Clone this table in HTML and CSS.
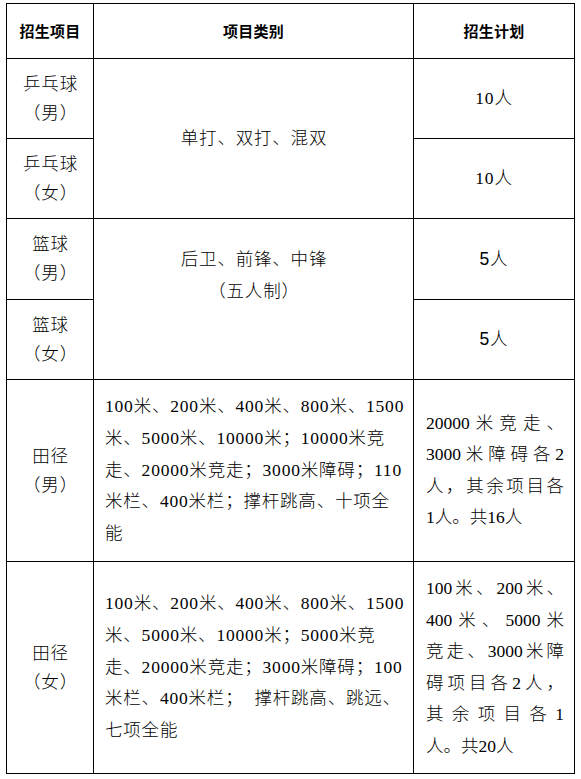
FILE: index.html
```html
<!DOCTYPE html>
<html lang="zh-CN">
<head>
<meta charset="utf-8">
<title>招生项目</title>
<link rel="stylesheet" href="styles.css">
</head>
<body>
<div class="sheet">
  <div class="grid">
    <div class="cell head">招生项目</div>
    <div class="cell head">项目类别</div>
    <div class="cell head">招生计划</div>

    <div class="cell name pp">乒乓球<br>（男）</div>
    <div class="cell mid span2">单打、双打、混双</div>
    <div class="cell plan">10人</div>
    <div class="cell name pp">乒乓球<br>（女）</div>
    <div class="cell plan">10人</div>

    <div class="cell name">篮球<br>（男）</div>
    <div class="cell mid span2 top">后卫、前锋、中锋<br>（五人制）</div>
    <div class="cell plan"><div><span class="sans">5</span>人</div></div>
    <div class="cell name">篮球<br>（女）</div>
    <div class="cell plan"><div><span class="sans">5</span>人</div></div>

    <div class="cell name">田径<br>（男）</div>
    <div class="cell long">
      <div class="ln">100米、200米、400米、800米、1500</div>
      <div class="ln">米、5000米、10000米；10000米竞</div>
      <div class="ln">走、20000米竞走；3000米障碍；110</div>
      <div class="ln">米栏、400米栏；撑杆跳高、十项全</div>
      <div class="ln">能</div>
    </div>
    <div class="cell quota">
      <div class="jl">20000米竞走、</div>
      <div class="jl">3000米障碍各2</div>
      <div class="jl">人，其余项目各</div>
      <div class="el">1人。共16人</div>
    </div>

    <div class="cell name">田径<br>（女）</div>
    <div class="cell long">
      <div class="ln">100米、200米、400米、800米、1500</div>
      <div class="ln">米、5000米、10000米；5000米竞</div>
      <div class="ln">走、20000米竞走；3000米障碍；100</div>
      <div class="ln">米栏、400米栏；<span class="gap"></span>撑杆跳高、跳远、</div>
      <div class="ln">七项全能</div>
    </div>
    <div class="cell quota">
      <div class="jl">100米、200米、</div>
      <div class="jl">400米、5000米</div>
      <div class="jl">竞走、3000米障</div>
      <div class="jl">碍项目各2人，</div>
      <div class="jl">其余项目各1</div>
      <div class="el">人。共20人</div>
    </div>
  </div>
</div>
</body>
</html>
```

FILE: styles.css
```css
html, body {
  margin: 0;
  padding: 0;
  background: #ffffff;
}

body {
  font-family: "Liberation Serif", "Noto Sans CJK SC", serif;
  font-weight: 300;
  color: #000000;
}

.sheet {
  padding: 3px 0 0 6px;
}

.grid {
  box-sizing: border-box;
  width: 569px;
  padding: 1px;
  gap: 1px;
  background: #000000;
  display: grid;
  grid-template-columns: 86px 319px 160px;
  grid-template-rows: 54px 79px 79px 80px 79px 181px 211px;
}

.cell {
  background: #ffffff;
  display: flex;
  flex-direction: column;
  justify-content: center;
  align-items: center;
  text-align: center;
  font-size: 17.5px;
  letter-spacing: 0.8px;
  line-height: 29px;
  white-space: nowrap;
}

.head {
  font-family: "Liberation Sans", "Noto Sans CJK SC", sans-serif;
  font-weight: 700;
  font-size: 15px;
  letter-spacing: 0.3px;
}

.name {
  line-height: 29px;
  padding-left: 1px;
}

.name.pp {
  line-height: 28.5px;
}

.span2 {
  grid-row: span 2;
}

.mid {
  line-height: 31.7px;
  padding-left: 1px;
}

.mid.top {
  justify-content: flex-start;
  padding-top: 25px;
}

.sans {
  font-family: "Liberation Sans", sans-serif;
  font-weight: 400;
}

.long {
  align-items: stretch;
  text-align: left;
  padding-left: 11px;
  line-height: 31.7px;
}

.gap {
  display: inline-block;
  width: 11px;
}

.quota {
  align-items: stretch;
  padding: 0 10px 0 12px;
  line-height: 31.5px;
  letter-spacing: 0;
}

.jl {
  text-align: justify;
  text-align-last: justify;
}

.el {
  text-align: left;
}
```
